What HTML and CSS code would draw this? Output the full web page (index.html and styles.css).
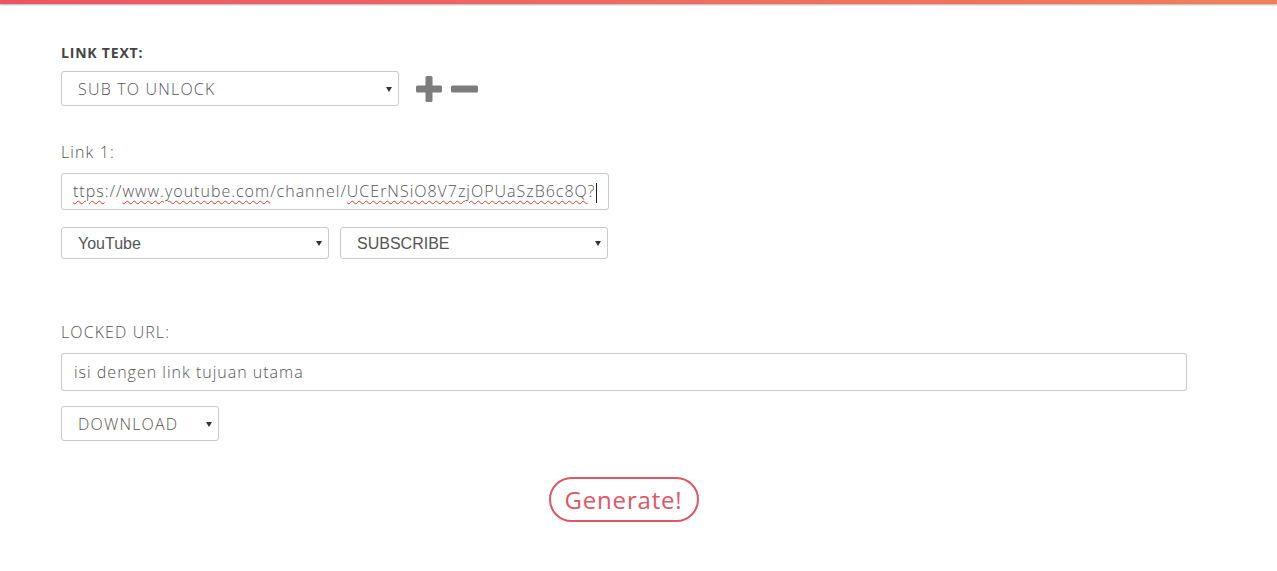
FILE: index.html
```html
<!DOCTYPE html>
<html>
<head>
<meta charset="utf-8">
<link rel="stylesheet" href="styles.css">
</head>
<body>
<div class="topbar"></div>
<main class="form">
  <section class="group g-linktext">
    <div class="label bold">LINK TEXT:</div>
    <div class="row">
      <span class="sel sel-w1"><select class="mont"><option>SUB TO UNLOCK</option></select></span>
      <span class="icons">
        <svg class="ic" width="26" height="26" viewBox="0 0 26 26"><rect x="9.5" y="0" width="7" height="26" rx="1.5" fill="#7d7d7d"/><rect x="0" y="9.5" width="26" height="7" rx="1.5" fill="#7d7d7d"/></svg>
        <svg class="ic" width="27" height="26" viewBox="0 0 27 26"><rect x="0" y="9.5" width="27" height="7" rx="1.5" fill="#7d7d7d"/></svg>
      </span>
    </div>
  </section>

  <section class="group g-link1">
    <div class="label">Link 1:</div>
    <div class="fake-input w-half"><span class="sp">ttps</span>://<span class="sp">www.youtube.com</span>/channel/<span class="sp">UCErNSiO8V7zjOPUaSzB6c8Q</span>?<span class="caret"></span></div>
    <div class="row pair">
      <span class="sel sel-w2"><select class="arial"><option>YouTube</option></select></span>
      <span class="sel sel-w2"><select class="arial"><option>SUBSCRIBE</option></select></span>
    </div>
  </section>

  <section class="group g-locked">
    <div class="label">LOCKED URL:</div>
    <input class="inp w-full" type="text" placeholder="isi dengen link tujuan utama">
    <div class="row">
      <span class="sel sel-w3"><select class="mont"><option>DOWNLOAD</option></select></span>
    </div>
  </section>

  <div class="actions">
    <button class="gen">Generate!</button>
  </div>
</main>
</body>
</html>
```
FILE: styles.css
```css
html, body { margin: 0; padding: 0; background: #fff; }
body { font-family: "Open Sans", "Liberation Sans", sans-serif; color: #555; }

.topbar {
  height: 4px;
  background: linear-gradient(90deg, #ec5563 0%, #ef6a60 50%, #f27e5a 100%);
  box-shadow: 0 1px 2px rgba(0,0,0,0.3);
}

.form {
  width: 1125px;
  margin-left: 61px;
  padding-top: 39px;
}

.label {
  font-size: 16px;
  font-weight: 300;
  color: #555;
  line-height: 20px;
  letter-spacing: 1.1px;
  margin-bottom: 11px;
}
.label.bold {
  font-weight: 700;
  font-size: 14px;
  color: #444;
  letter-spacing: 0.8px;
  margin-bottom: 8px;
}

.row { display: flex; align-items: center; }
.pair { gap: 11px; margin-top: 17px; }

.g-link1 { margin-top: 36px; }
.g-locked { margin-top: 63px; }

.sel { position: relative; display: inline-block; }
.sel select {
  -webkit-appearance: none;
  appearance: none;
  width: 100%;
  background: #fff;
  border: 1px solid #c9c9c9;
  border-radius: 3px;
  color: #555;
  padding: 0 0 0 16px;
  margin: 0;
  outline: none;
}
.sel::after {
  content: "";
  position: absolute;
  right: 7px;
  top: 50%;
  margin-top: -2px;
  border-left: 3px solid transparent;
  border-right: 3px solid transparent;
  border-top: 5px solid #333;
  pointer-events: none;
}
.sel-w1 { width: 338px; }
.sel-w1 select { height: 35px; font-size: 16px; }
.sel-w2 { width: 268px; }
.sel-w2 select { height: 32px; font-size: 16px; }
.sel-w3 { width: 158px; margin-top: 15px; }
.sel-w3 select { height: 35px; font-size: 16px; }

.mont { font-family: "Open Sans", "Liberation Sans", sans-serif; font-weight: 300; letter-spacing: 1.2px; }
.arial { font-family: "Liberation Sans", Arial, sans-serif; }

.icons { display: flex; align-items: center; gap: 9px; margin-left: 17px; }
.ic { display: block; }

.fake-input {
  box-sizing: border-box;
  height: 37px;
  border: 1px solid #c9c9c9;
  border-radius: 3px;
  padding: 0 11px;
  font-size: 16px;
  font-weight: 300;
  line-height: 35px;
  color: #555;
  white-space: nowrap;
  overflow: hidden;
  letter-spacing: 1px;
}
.w-half { width: 548px; }
.sp { text-decoration: underline wavy #e03a3a; text-decoration-thickness: 1px; text-underline-offset: 3px; }
.caret { display: inline-block; width: 1px; height: 20px; background: #222; vertical-align: middle; margin-left: 0; }

.inp {
  box-sizing: border-box;
  display: block;
  height: 38px;
  border: 1px solid #c9c9c9;
  border-radius: 3px;
  padding: 0 12px;
  font-family: "Open Sans", "Liberation Sans", sans-serif;
  font-size: 16px;
  font-weight: 300;
  color: #555;
  outline: none;
  margin: 0;
  letter-spacing: 1px;
}
.inp::placeholder { color: #555; opacity: 1; letter-spacing: 1px; }
.w-full { width: 1126px; }

.actions { display: flex; justify-content: center; margin-top: 36px; }
.gen {
  box-sizing: border-box;
  width: 150px;
  height: 45px;
  border: 2px solid #e25565;
  border-radius: 23px;
  background: #fff;
  color: #e25565;
  font-family: "Open Sans", "Liberation Sans", sans-serif;
  font-size: 24px;
  font-weight: 400;
  letter-spacing: 0.8px;
  padding: 0;
  cursor: pointer;
}
```
